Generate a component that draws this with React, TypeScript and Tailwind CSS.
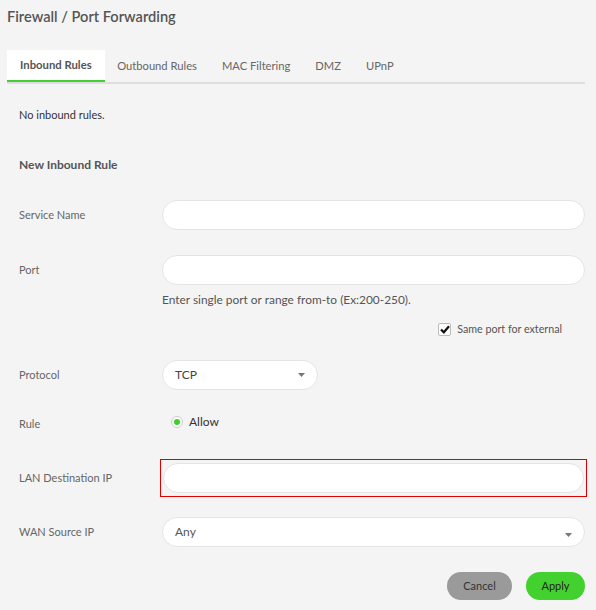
import React from "react";

const tabs = ["Inbound Rules", "Outbound Rules", "MAC Filtering", "DMZ", "UPnP"];

const Caret: React.FC = () => (
  <svg width="7" height="4" viewBox="0 0 7 4" className="shrink-0">
    <path d="M0 0 L7 0 L3.5 4 Z" fill="#777" />
  </svg>
);

const Row: React.FC<{ label: string; className?: string; children: React.ReactNode }> = ({ label, className, children }) => (
  <div className={"flex items-center " + (className || "")}>
    <div className="w-[143px] shrink-0 text-[11px] text-[#666]">{label}</div>
    <div className="flex-1">{children}</div>
  </div>
);

const TextInput: React.FC = () => (
  <input
    type="text"
    className="block w-full h-[30px] rounded-full bg-white border border-[#e4e4e4] px-3 text-[12px] outline-none"
  />
);

const App: React.FC = () => {
  return (
    <div className="min-h-screen bg-[#f4f4f4] font-['Lato','Noto_Sans',sans-serif] text-[#555] pt-[7px]">
      <h1 className="pl-[7px] text-[14.6px] leading-[20px] font-semibold text-[#555]">Firewall / Port Forwarding</h1>

      <div className="mt-[23px] ml-[7px] w-[578px] flex border-b-2 border-[#dedede]">
        {tabs.map((t, i) => (
          <div
            key={t}
            className={
              i === 0
                ? "h-[32px] -mb-[2px] px-[13px] flex items-center bg-white border-b-2 border-[#46cc34] text-[11.3px] font-bold text-[#555]"
                : "h-[32px] px-[12.5px] flex items-center text-[11.2px] text-[#666]"
            }
          >
            {t}
          </div>
        ))}
      </div>

      <div className="pl-[19px] pr-[11px]">
        <p className="mt-[23px] text-[11px] leading-[16px] text-[#333]">No inbound rules.</p>
        <p className="mt-[34px] text-[12px] leading-[16px] font-bold text-[#555]">New Inbound Rule</p>

        <Row label="Service Name" className="mt-[27px]">
          <TextInput />
        </Row>

        <Row label="Port" className="mt-[25px]">
          <TextInput />
        </Row>

        <p className="mt-[7px] ml-[143px] text-[11.9px] leading-[16px] text-[#555]">
          Enter single port or range from-to (Ex:200-250).
        </p>

        <div className="mt-[13px] flex justify-end pr-[23px] h-[16px] items-center">
          <label className="flex items-center gap-[6px] text-[10.7px] text-[#555]">
            <span className="w-[13px] h-[13px] rounded-[2px] border border-[#bbb] bg-white flex items-center justify-center">
              <svg width="10" height="9" viewBox="0 0 10 9">
                <path d="M1 4.5 L3.8 7.3 L9 1.2" stroke="#111" strokeWidth="2.2" fill="none" />
              </svg>
            </span>
            Same port for external
          </label>
        </div>

        <Row label="Protocol" className="mt-[23px]">
          <div className="w-[156px] h-[30px] rounded-full bg-white border border-[#e4e4e4] flex items-center justify-between pl-[12px] pr-[12px] text-[12px] text-[#444]">
            <span>TCP</span>
            <Caret />
          </div>
        </Row>

        <Row label="Rule" className="mt-[23px] h-[22px]">
          <div className="flex items-center ml-[9px] -mt-[5px] gap-[6px]">
            <span className="w-[12px] h-[12px] rounded-full border border-[#ccc] bg-white flex items-center justify-center">
              <span className="w-[6px] h-[6px] rounded-full bg-[#3fcf2b]" />
            </span>
            <span className="text-[12px] text-[#333]">Allow</span>
          </div>
        </Row>

        <Row label="LAN Destination IP" className="mt-[24px]">
          <div className="-mx-[2px] border border-[#e00000] px-[2px] py-[3px]">
            <TextInput />
          </div>
        </Row>

        <Row label="WAN Source IP" className="mt-[20px]">
          <div className="w-full h-[30px] rounded-full bg-white border border-[#e4e4e4] flex items-center justify-between pl-[12px] pr-[12px] text-[12px] text-[#555]">
            <span>Any</span>
            <span className="mt-[5px]">
              <Caret />
            </span>
          </div>
        </Row>

        <div className="mt-[25px] flex justify-end gap-[14px]">
          <button className="w-[65px] h-[28px] rounded-full bg-[#9a9a9a] text-[11px] text-[#333]">Cancel</button>
          <button className="w-[59px] h-[28px] rounded-full bg-[#42d12f] text-[11px] text-[#222]">Apply</button>
        </div>
      </div>
    </div>
  );
};

export default App;
